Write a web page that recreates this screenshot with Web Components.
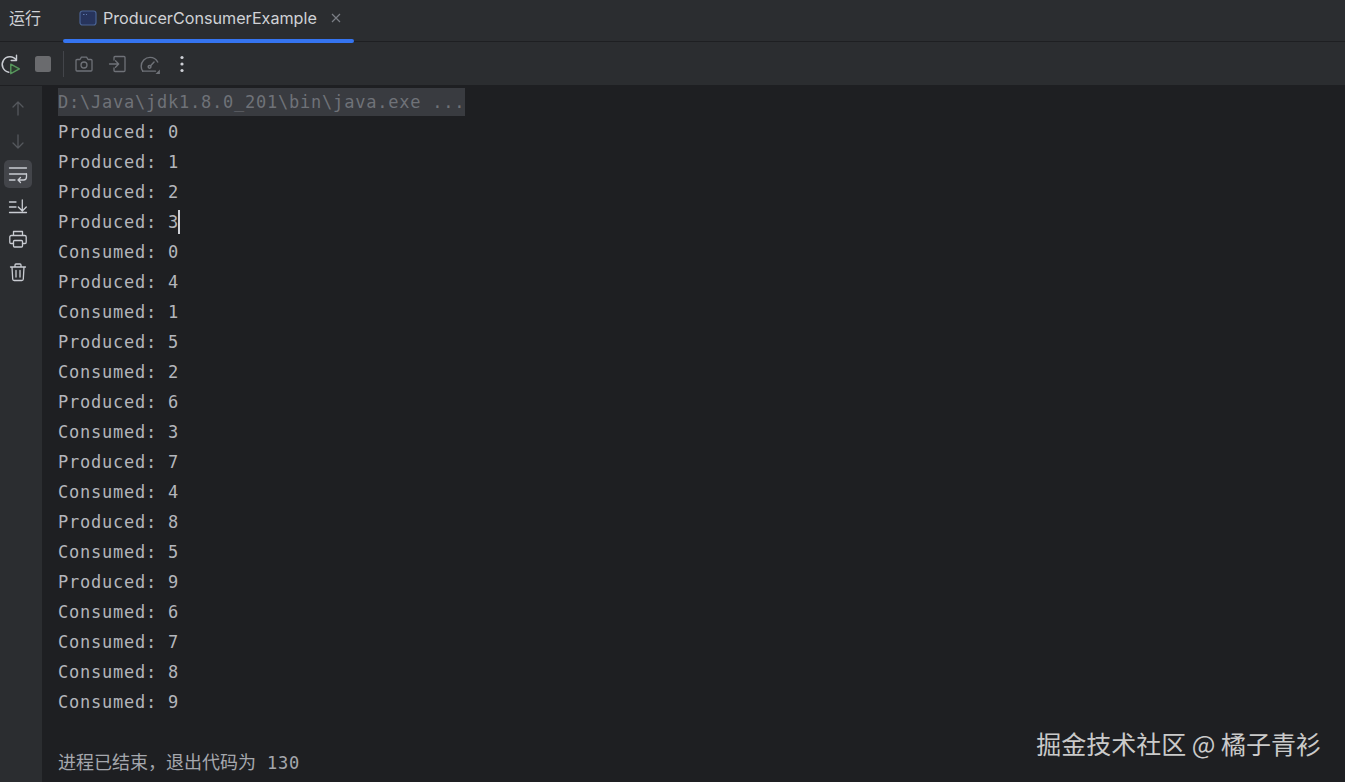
<!DOCTYPE html>
<html lang="zh">
<head>
<meta charset="utf-8">
<title>ProducerConsumerExample</title>
<style>
html, body { margin: 0; height: 100%; background: #1e1f22; overflow: hidden; }
</style>
</head>
<body>
<run-window>
  <run-tabs slot="tabs" title-text="运行" tab="ProducerConsumerExample"></run-tabs>
  <run-toolbar slot="toolbar"></run-toolbar>
  <side-toolbar slot="side"></side-toolbar>
  <console-view slot="main"></console-view>
</run-window>
<script>
/////////////////////////
// icons
/////////////////////////

const icon = (size, body, stroke = '#6f7278') =>
    `<svg width="${size}" height="${size}" viewBox="0 0 20 20" fill="none" stroke="${stroke}" stroke-width="1.3" stroke-linecap="round" stroke-linejoin="round">${body}</svg>`;

/////////////////////////
// BasicElement
/////////////////////////

class BasicElement extends HTMLElement {
    constructor() {
        super();
        this.attachShadow({ mode: 'open' });
    }

    connectedCallback() {
        this.shadowRoot.innerHTML = this.render();
    }

    render() {
        return '';
    }
}

/////////////////////////
// RunWindow
/////////////////////////

class RunWindow extends BasicElement {
    render() {
        return `<style>
            :host { display: grid; grid-template-columns: 43px 1fr; grid-template-rows: 42px 44px 696px; height: 782px; background: #1e1f22; }
            ::slotted([slot=tabs]), ::slotted([slot=toolbar]) { grid-column: 1 / 3; }
        </style>
        <slot name="tabs"></slot>
        <slot name="toolbar"></slot>
        <slot name="side"></slot>
        <slot name="main"></slot>`;
    }
}

/////////////////////////
// RunTabs
/////////////////////////

class RunTabs extends BasicElement {
    render() {
        return `<style>
            :host { display: flex; align-items: stretch; background: #2b2d30; border-bottom: 1px solid #1e1f22; box-sizing: border-box; height: 42px; font: 16px Inter, "Noto Sans CJK SC", sans-serif; color: #d0d2d6; }
            .title { width: 63px; padding: 0 0 8px 9px; box-sizing: border-box; display: flex; align-items: center; font-family: "Noto Sans CJK SC", sans-serif; }
            .tab { position: relative; width: 291px; margin-bottom: -2px; padding: 0 0 8px 16px; box-sizing: border-box; display: flex; align-items: center; gap: 6px; }
            .tab::after { content: ''; position: absolute; left: 0; right: 0; bottom: 0; height: 4px; border-radius: 2px; background: #3574f0; }
            .x { margin-left: 8px; display: flex; }
            .name { width: 213px; white-space: nowrap; font-size: 16.15px; }
        </style>
        <div class="title">${this.getAttribute('title-text')}</div>
        <div class="tab">
            <svg width="18" height="18" viewBox="0 0 18 18" fill="#27345c" stroke="#4a6394" stroke-width="1.2"><rect x="1" y="2" width="16" height="14" rx="2.5"/><path d="M4 5.5h1.5M7 5.5h1" stroke="#5f79ad"/></svg>
            <span class="name">${this.getAttribute('tab')}</span>
            <span class="x"><svg width="12" height="12" viewBox="0 0 12 12" stroke="#7b7e85" stroke-width="1.2"><path d="M2 2l8 8M10 2l-8 8"/></svg></span>
        </div>`;
    }
}

/////////////////////////
// RunToolbar
/////////////////////////

class RunToolbar extends BasicElement {
    render() {
        return `<style>
            :host { display: flex; align-items: center; height: 44px; background: #2b2d30; border-bottom: 1px solid #1e1f22; box-sizing: border-box; }
            .slot { display: flex; justify-content: center; align-items: center; }
            .sep { width: 1px; height: 26px; background: #43454a; margin: 0 10px 0 9px; }
        </style>
        <div class="slot" style="width:22px">${icon(22, `
            <path d="M14.800 6.500A7 7 0 1 0 8 17.400" stroke="#c9ccd2" stroke-width="1.4"/><path d="M15 2v4.800H10.200" stroke="#c9ccd2" stroke-width="1.3"/>
            <path d="M9.800 10.200l7.800 4.300-7.800 4.300z" stroke="#57965c" fill="#2b3a2e" stroke-width="1.3"/>`)}</div>
        <div class="slot" style="width:20px;margin-left:11px"><svg width="16" height="16"><rect width="16" height="16" rx="2.5" fill="#6a6b6e"/></svg></div>
        <div class="sep" style="margin-left:10px"></div>
        <div class="slot" style="width:20px">${icon(20, `
            <path d="M2 6.500a1 1 0 0 1 1-1h3l1.400-2.300h5.200L14 5.500h3a1 1 0 0 1 1 1V16a1 1 0 0 1-1 1H3a1 1 0 0 1-1-1z"/><circle cx="10" cy="11" r="3"/>`)}</div>
        <div class="slot" style="width:20px;margin-left:14px">${icon(20, `
            <path d="M6 6V3.500A1 1 0 0 1 7 2.500h9a1 1 0 0 1 1 1v13a1 1 0 0 1-1 1H7a1 1 0 0 1-1-1V14"/><path d="M1.500 10h9M7.500 6.800l3.200 3.200-3.200 3.200"/>`)}</div>
        <div class="slot" style="width:22px;margin-left:11px">${icon(22, `
            <path d="M3.400 16.500A7.600 7.600 0 0 1 2 12a8 8 0 0 1 8-8 8 8 0 0 1 7 4.200"/><path d="M3.400 16.500H15"/><circle cx="9.600" cy="12.600" r="1.300"/><path d="M10.500 11.600l3.200-3.400"/>
            <path d="M19 15v4h-4z" fill="#6f7278" stroke="none"/>`)}</div>
        <div class="slot" style="width:6px;margin-left:18px"><svg width="4" height="18" viewBox="0 0 4 18" fill="#ced0d6"><circle cx="2" cy="2.500" r="1.600"/><circle cx="2" cy="9" r="1.600"/><circle cx="2" cy="15.500" r="1.600"/></svg></div>`;
    }
}

/////////////////////////
// SideToolbar
/////////////////////////

class SideToolbar extends BasicElement {
    render() {
        return `<style>
            :host { display: flex; flex-direction: column; align-items: center; background: #2b2d30; border-right: 1px solid #1e1f22; box-sizing: border-box; padding: 8px 6px 0 0; gap: 5px; }
            .b { width: 28px; height: 28px; display: flex; align-items: center; justify-content: center; border-radius: 5px; }
            .on { background: #43454a; }
        </style>
        <div class="b">${icon(20, `<path d="M10 17V4M5 9l5-5 5 5"/>`, '#55585d')}</div>
        <div class="b">${icon(20, `<path d="M10 4v13M5 12l5 5 5-5"/>`, '#55585d')}</div>
        <div class="b on">${icon(20, `<path d="M1.500 4h17M1.500 10h17"/><path d="M1.500 16h5.500M18.500 10v3a3 3 0 0 1-3 3H10M12.500 13.500L10 16l2.500 2.500" />`, '#c9ccd2')}</div>
        <div class="b" style="margin-top:-1px">${icon(20, `<path d="M1.500 6h6.500M1.500 11h6.500M1.500 16.500h17M14.300 4v11M10.300 11l4 4 4-4"/>`, '#c9ccd2')}</div>
        <div class="b">${icon(20, `<path d="M5.500 6.500V2.500h9v4M5.500 14.500H3a1.200 1.200 0 0 1-1.200-1.200V8A1.500 1.500 0 0 1 3.300 6.500h13.400A1.500 1.500 0 0 1 18.200 8v5.300a1.200 1.200 0 0 1-1.200 1.200h-2.500"/><rect x="5.500" y="11.500" width="9" height="6.500" rx="1"/>`, '#c9ccd2')}</div>
        <div class="b">${icon(20, `<path d="M2.500 5h15M7 5V3a1 1 0 0 1 1-1h4a1 1 0 0 1 1 1v2M4 5l.7 12a1.500 1.500 0 0 0 1.500 1.500h7.600a1.500 1.500 0 0 0 1.500-1.500L16 5M8 8.500v6.500M12 8.500v6.500"/>`, '#c9ccd2')}</div>`;
    }
}

/////////////////////////
// ConsoleView
/////////////////////////

const OUTPUT = [
    'Produced: 0', 'Produced: 1', 'Produced: 2', 'Produced: 3', 'Consumed: 0', 'Produced: 4',
    'Consumed: 1', 'Produced: 5', 'Consumed: 2', 'Produced: 6', 'Consumed: 3', 'Produced: 7',
    'Consumed: 4', 'Produced: 8', 'Consumed: 5', 'Produced: 9', 'Consumed: 6', 'Consumed: 7',
    'Consumed: 8', 'Consumed: 9',
];

class ConsoleView extends BasicElement {
    render() {
        const lines = OUTPUT.map((line, i) =>
            `<div class="l">${line}${i === 3 ? '<i class="caret"></i>' : ''}</div>`
        ).join('');
        return `<style>
            :host { display: block; position: relative; background: #1e1f22; padding: 2px 0 0 15px; font: 17px/30px "DejaVu Sans Mono", "Noto Sans CJK SC", monospace; letter-spacing: 0.77px; color: #b4b6bc; }
            .l { height: 30px; white-space: pre; }
            .first { height: 29px; }
            .head { display: block; width: 407px; height: 28px; line-height: 28px; background: #393b40; color: #6f7278; white-space: pre; }
            .caret { display: inline-block; width: 2px; height: 24px; background: #ced0d6; vertical-align: -6px; margin-left: -1px; }
            .blank { height: 29px; }
            .end { color: #a5a7ad; white-space: pre; }
            .end span { font-family: "Noto Sans CJK SC", sans-serif; font-size: 18px; letter-spacing: 0; }
            .mark { position: absolute; right: 24px; bottom: 19px; font: 25px/40px "Noto Sans CJK SC", sans-serif; letter-spacing: 0; color: #cacaca; white-space: pre; }
        </style>
        <div class="l first"><span class="head">D:\\Java\\jdk1.8.0_201\\bin\\java.exe ...</span></div>
        ${lines}
        <div class="l blank"></div>
        <div class="l end"><span>进程已结束，退出代码为</span> 130</div>
        <div class="mark">掘金技术社区 @ 橘子青衫</div>`;
    }
}

customElements.define('run-window', RunWindow);
customElements.define('run-tabs', RunTabs);
customElements.define('run-toolbar', RunToolbar);
customElements.define('side-toolbar', SideToolbar);
customElements.define('console-view', ConsoleView);
</script>
</body>
</html>
